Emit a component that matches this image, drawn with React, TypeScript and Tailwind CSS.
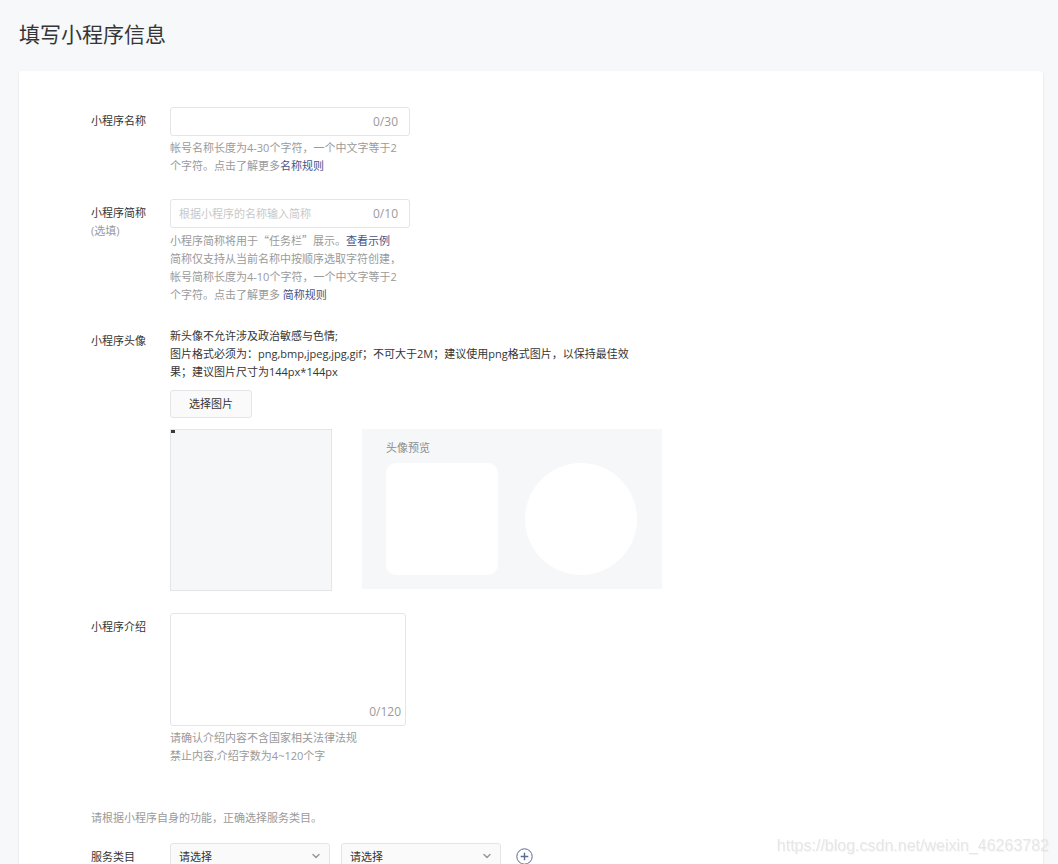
import type { ReactNode } from "react";
import { ChevronDown } from "lucide-react";

interface FormRowProps {
  label: string;
  /** Id of the control the label belongs to. */
  htmlFor: string;
  /** Small grey note under the label. */
  note?: string;
  className?: string;
  children: ReactNode;
}

function FormRow({ label, htmlFor, note, className = "mb-6", children }: FormRowProps) {
  return (
    <div className={`flex items-start ${className}`}>
      <div className="w-[79px] shrink-0 pt-[5px]">
        <label htmlFor={htmlFor} className="block">
          {label}
        </label>
        {note ? <span className="block text-[#9a9a9a]">{note}</span> : null}
      </div>
      <div className="min-w-0">{children}</div>
    </div>
  );
}

interface CountedInputProps {
  id: string;
  max: number;
  placeholder?: string;
}

function CountedInput({ id, max, placeholder }: CountedInputProps) {
  return (
    <div className="flex h-[29px] w-60 items-center rounded-[3px] border border-[#e4e5e9] bg-white px-2">
      <input
        id={id}
        type="text"
        placeholder={placeholder}
        className="min-w-0 flex-1 bg-transparent outline-none placeholder:text-[#c8c8c8]"
      />
      <span className="pr-[3px] text-xs text-[#9a9a9a]">0/{max}</span>
    </div>
  );
}

function CategorySelect({ id, label }: { id: string; label?: string }) {
  return (
    <div className="relative">
      <select
        id={id}
        aria-label={label}
        className="block h-7 w-40 appearance-none rounded-[3px] border border-[#e4e5e9] bg-[#fafafa] pr-7 pl-2 outline-none"
      >
        <option>请选择</option>
      </select>
      <ChevronDown
        className="pointer-events-none absolute top-[7px] right-2 size-3 text-[#9a9a9a]"
        strokeWidth={3}
      />
    </div>
  );
}

function TextLink({ children }: { children: ReactNode }) {
  return (
    <a href="#" className="text-[#44548c]">
      {children}
    </a>
  );
}

export default function App() {
  return (
    <div className="min-h-screen bg-[#f6f8f9] pr-[15px] pl-[19px] font-['Open_Sans','Noto_Sans_CJK_SC',sans-serif] text-[11px] leading-[18px] text-[#353535]">
      <header className="flex h-[71px] items-center">
        <h1 className="pb-1 text-[21px] leading-7">填写小程序信息</h1>
      </header>

      <form className="rounded-t-[3px] bg-white pt-9 pr-6 pb-12 pl-[72px] shadow-[0_1px_2px_rgba(150,150,150,0.3)]">
        <FormRow label="小程序名称" htmlFor="name">
          <CountedInput id="name" max={30} />
          <p className="mt-[3px] w-[235px] text-[#9a9a9a]">
            帐号名称长度为4-30个字符，一个中文字等于2
            <br />
            个字符。点击了解更多<TextLink>名称规则</TextLink>
          </p>
        </FormRow>

        <FormRow label="小程序简称" htmlFor="short-name" note="(选填)" className="mb-[23px]">
          <CountedInput id="short-name" max={10} placeholder="根据小程序的名称输入简称" />
          <p className="mt-[3px] w-[235px] text-[#9a9a9a]">
            小程序简称将用于
            <span className="font-['Noto_Sans_CJK_SC',sans-serif]">“任务栏”</span>
            展示。<TextLink>查看示例</TextLink>
            <br />
            简称仅支持从当前名称中按顺序选取字符创建，
            <br />
            帐号简称长度为4-10个字符，一个中文字等于2
            <br />
            个字符。点击了解更多 <TextLink>简称规则</TextLink>
          </p>
        </FormRow>

        <FormRow label="小程序头像" htmlFor="avatar" className="mb-[22px]">
          <p className="max-w-[480px]">
            新头像不允许涉及政治敏感与色情;
            <br />
            图片格式必须为：png,bmp,jpeg,jpg,gif；不可大于2M；建议使用png格式图片，以保持最佳效
            <br />
            果；建议图片尺寸为144px*144px
          </p>
          <button
            id="avatar"
            type="button"
            className="mt-[9px] block h-7 w-[82px] rounded-[3px] border border-[#e4e5e9] bg-[#fafafa]"
          >
            选择图片
          </button>
          <div className="mt-[11px] flex items-start gap-[30px]">
            {/* Crop area; the dark dot is the collapsed crop handle. */}
            <div className="size-[162px] border border-[#e4e5e9] bg-[#f6f7f9]">
              <div className="h-[3px] w-1 bg-[#3a3a3a]" />
            </div>
            <div className="h-40 w-[300px] bg-[#f6f7f9] px-6 pt-[10px] text-[#8d8d8d]">
              <p>头像预览</p>
              <div className="mt-[6px] flex gap-[27px]">
                <div className="size-28 rounded-[10px] bg-white" />
                <div className="size-28 rounded-full bg-white" />
              </div>
            </div>
          </div>
        </FormRow>

        <FormRow label="小程序介绍" htmlFor="intro" className="mb-11">
          <div className="relative w-[236px]">
            <textarea
              id="intro"
              className="block h-[113px] w-full resize-none rounded-[3px] border border-[#e4e5e9] bg-white p-2 outline-none"
            />
            <span className="absolute right-[5px] bottom-[5px] text-xs leading-[18px] text-[#9a9a9a]">
              0/120
            </span>
          </div>
          <p className="mt-[3px] text-[#9a9a9a]">
            请确认介绍内容不含国家相关法律法规
            <br />
            禁止内容,介绍字数为4~120个字
          </p>
        </FormRow>

        <p className="mb-4 text-[#9a9a9a]">请根据小程序自身的功能，正确选择服务类目。</p>

        <FormRow label="服务类目" htmlFor="category" className="">
          <div className="flex items-center gap-[11px]">
            <CategorySelect id="category" />
            <CategorySelect id="sub-category" label="二级类目" />
            <button type="button" aria-label="添加类目" className="ml-1 pb-[2px]">
              <svg
                viewBox="0 0 17 17"
                className="block size-[17px]"
                fill="none"
                stroke="#576b95"
                aria-hidden
              >
                <circle cx="8.5" cy="8.5" r="7.7" strokeWidth="1" />
                <path d="M8.5 4.7v7.6M4.7 8.5h7.6" strokeWidth="1.4" />
              </svg>
            </button>
          </div>
        </FormRow>
      </form>

      <span className="fixed right-[9px] bottom-[6px] font-['Liberation_Sans',sans-serif] text-base text-[#e6e6e6] [text-shadow:1px_1px_0_rgba(0,0,0,0.04)]">
        https://blog.csdn.net/weixin_46263782
      </span>
    </div>
  );
}
